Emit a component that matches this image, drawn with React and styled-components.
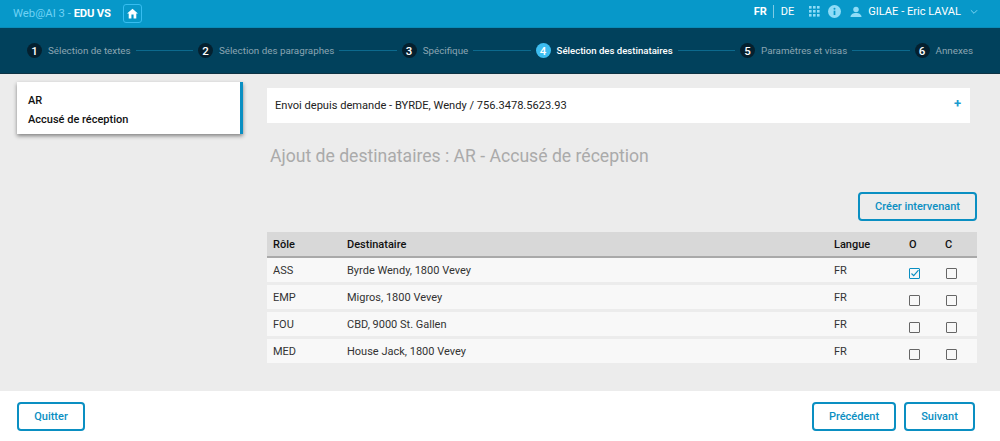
import React from "react";
import styled, { createGlobalStyle } from "styled-components";

const Global = createGlobalStyle`
  html, body { margin: 0; padding: 0; background: #fff; }
  body { font-family: Roboto, "Liberation Sans", sans-serif; }
`;

const Page = styled.div`
  width: 1000px;
  height: 441px;
  display: flex;
  flex-direction: column;
  overflow: hidden;
`;

const TopBar = styled.header`
  height: 28px;
  flex: none;
  box-sizing: border-box;
  background: #0798c9;
  border-bottom: 1px solid #0a8bb8;
  display: flex;
  align-items: center;
  padding: 0 22px 0 13px;
  color: #fff;
`;

const Brand = styled.div`
  color: #6fd2f5;
  font-size: 11.3px;
  white-space: nowrap;
  b { color: #fff; font-weight: 700; letter-spacing: -0.2px; }
`;

const HomeButton = styled.div`
  width: 17px;
  height: 17px;
  margin-left: 12px;
  border: 1px solid #37bdf0;
  border-radius: 3px;
  display: flex;
  align-items: center;
  justify-content: center;
`;

const TopRight = styled.div`
  margin-left: auto;
  display: flex;
  align-items: center;
  margin-top: -4px;
`;

const Lang = styled.span`
  font-weight: ${(p) => (p.$active ? 700 : 400)};
  font-size: 11px;
`;

const LangSep = styled.span`
  width: 1px;
  height: 13px;
  background: #7fcbe4;
  margin: 0 7px 0 6px;
`;

const User = styled.span`
  font-size: 11.1px;
  margin-left: 6px;
`;

const Stepper = styled.nav`
  height: 46px;
  flex: none;
  box-sizing: border-box;
  background: #01415c;
  border-bottom: 1px solid #0d3344;
  display: flex;
  align-items: center;
  padding: 0 27px;
`;

const Step = styled.div`
  display: flex;
  align-items: center;
  flex: none;
  gap: 6px;
`;

const StepNum = styled.span`
  width: 15px;
  height: 15px;
  border-radius: 50%;
  background: ${(p) => (p.$active ? "#3dbdf0" : "#04202f")};
  color: #fff;
  font-size: 11.5px;
  font-weight: 500;
  display: flex;
  align-items: center;
  justify-content: center;
`;

const StepLabel = styled.span`
  font-size: ${(p) => (p.$active ? 9.6 : 9.8)}px;
  color: ${(p) => (p.$active ? "#fff" : "#8ba5b2")};
  font-weight: ${(p) => (p.$active ? 500 : 400)};
  white-space: nowrap;
`;

const StepLine = styled.span`
  flex: 1;
  height: 1px;
  background: #0c6a8e;
  margin: 0 5px;
`;

const Main = styled.main`
  flex: 1;
  background: #ececec;
  display: flex;
  padding: 8px 23px 0 17px;
  min-height: 0;
`;

const Side = styled.aside`
  width: 226px;
  height: 52px;
  flex: none;
  box-sizing: border-box;
  background: #fff;
  border-right: 3px solid #0a8fc2;
  box-shadow: 0 2px 4px rgba(0, 0, 0, 0.45);
  padding: 9px 11px;
  font-size: 11px;
  font-weight: 500;
  line-height: 19px;
  color: #111;
`;

const Content = styled.section`
  flex: 1;
  margin-left: 24px;
  display: flex;
  flex-direction: column;
  min-width: 0;
`;

const Accordion = styled.div`
  height: 35px;
  margin: 6px 7px 0 0;
  background: #fff;
  display: flex;
  align-items: center;
  justify-content: space-between;
  padding: 0 9px 0 8px;
  font-size: 11.1px;
  color: #222;
`;

const Plus = styled.span`
  color: #1a9bcf;
  font-size: 13px;
  font-weight: 700;
  padding-bottom: 5px;
`;

const Title = styled.h2`
  margin: 22px 0 0 3px;
  font-size: 17.6px;
  line-height: 22px;
  font-weight: 400;
  color: #aaa;
`;

const Actions = styled.div`
  display: flex;
  justify-content: flex-end;
  margin-top: 25px;
`;

const Button = styled.button`
  box-sizing: border-box;
  height: 29px;
  width: ${(p) => p.$w}px;
  padding: 0;
  background: ${(p) => p.$bg || "#fff"};
  border: 2px solid #0a8fc2;
  border-radius: 4px;
  color: #0a8fc2;
  font-family: inherit;
  font-size: 11px;
  font-weight: 500;
`;

const Table = styled.div`
  margin-top: 11px;
  display: flex;
  flex-direction: column;
`;

const Cols = `
  display: grid;
  grid-template-columns: 74px 487px 74px 37px 1fr;
  align-items: center;
`;

const Head = styled.div`
  ${Cols}
  height: 26px;
  box-sizing: border-box;
  background: #d8d8d8;
  border-bottom: 2px solid #a9a9a9;
  font-size: 11px;
  font-weight: 500;
  color: #111;
  padding-left: 6px;
`;

const Row = styled.div`
  ${Cols}
  height: 24px;
  margin-bottom: 3px;
  background: #f8f8f8;
  font-size: 11px;
  color: #333;
  padding-left: 6px;
  &:last-child { margin-bottom: 0; }
`;

const HeadMark = styled.span`
  padding-left: 1px;
`;

const Check = styled.span`
  width: 9px;
  height: 9px;
  border: 1.5px solid ${(p) => (p.$on ? "#0a8fc2" : "#666")};
  border-radius: 1px;
  display: block;
  margin: 6px 0 0 1px;
  svg { display: block; }
`;

const Footer = styled.footer`
  height: 50px;
  flex: none;
  box-sizing: border-box;
  background: #fff;
  display: flex;
  align-items: center;
  padding: 1px 25px 0 17px;
  gap: 8px;
`;

const Spacer = styled.div`
  flex: 1;
`;

const steps = [
  ["1", "Sélection de textes"],
  ["2", "Sélection des paragraphes"],
  ["3", "Spécifique"],
  ["4", "Sélection des destinataires", true],
  ["5", "Paramètres et visas"],
  ["6", "Annexes"],
];

const rows = [
  ["ASS", "Byrde Wendy, 1800 Vevey", true],
  ["EMP", "Migros, 1800 Vevey"],
  ["FOU", "CBD, 9000 St. Gallen"],
  ["MED", "House Jack, 1800 Vevey"],
];

const Box = ({ on }) => (
  <Check $on={on}>
    {on && (
      <svg width="9" height="9" viewBox="0 0 9 9" fill="none">
        <path d="M1.5 4.5 L3.7 6.7 L8.5 1.2" stroke="#0a8fc2" strokeWidth="1.1" />
      </svg>
    )}
  </Check>
);

export default function App() {
  return (
    <Page>
      <Global />
      <TopBar>
        <Brand>
          Web@AI 3 - <b>EDU VS</b>
        </Brand>
        <HomeButton>
          <svg width="13" height="13" viewBox="0 0 24 24" fill="#fff">
            <path d="M10 21v-7h4v7h5v-9h3L12 3 2 12h3v9z" />
          </svg>
        </HomeButton>
        <TopRight>
          <Lang $active>FR</Lang>
          <LangSep />
          <Lang>DE</Lang>
          <svg width="11" height="11" viewBox="0 0 11 11" fill="#8fdcf7" style={{ marginLeft: 15 }}>
            {[0, 4, 8].flatMap((y) =>
              [0, 4, 8].map((x) => <rect key={`${x}-${y}`} x={x} y={y} width="2.6" height="2.6" />)
            )}
          </svg>
          <svg width="13" height="13" viewBox="0 0 24 24" style={{ marginLeft: 8 }}>
            <circle cx="12" cy="12" r="12" fill="#8fdcf7" />
            <rect x="10.4" y="10.5" width="3.2" height="8" fill="#0798c9" />
            <circle cx="12" cy="7" r="1.9" fill="#0798c9" />
          </svg>
          <svg width="12" height="12" viewBox="0 0 24 24" fill="#8fdcf7" style={{ marginLeft: 9 }}>
            <circle cx="12" cy="7" r="5.5" />
            <path d="M1 22c0-5 5-8 11-8s11 3 11 8z" />
          </svg>
          <User>GILAE - Eric LAVAL</User>
          <svg width="8" height="6" viewBox="0 0 9 6" fill="none" style={{ marginLeft: 9 }}>
            <path d="M1 1l3.5 3.5L8 1" stroke="#8fdcf7" strokeWidth="1" />
          </svg>
        </TopRight>
      </TopBar>
      <Stepper>
        {steps.map(([n, label, active], i) => (
          <React.Fragment key={n}>
            {i > 0 && <StepLine />}
            <Step>
              <StepNum $active={active}>{n}</StepNum>
              <StepLabel $active={active}>{label}</StepLabel>
            </Step>
          </React.Fragment>
        ))}
      </Stepper>
      <Main>
        <Side>
          AR
          <br />
          Accusé de réception
        </Side>
        <Content>
          <Accordion>
            <span>Envoi depuis demande - BYRDE, Wendy / 756.3478.5623.93</span>
            <Plus>+</Plus>
          </Accordion>
          <Title>Ajout de destinataires : AR - Accusé de réception</Title>
          <Actions>
            <Button $w={119} $bg="transparent">Créer intervenant</Button>
          </Actions>
          <Table>
            <Head>
              <span>Rôle</span>
              <span>Destinataire</span>
              <span>Langue</span>
              <HeadMark>O</HeadMark>
              <span>C</span>
            </Head>
            {rows.map(([role, name, on]) => (
              <Row key={role}>
                <span>{role}</span>
                <span>{name}</span>
                <span>FR</span>
                <span><Box on={on} /></span>
                <span><Box /></span>
              </Row>
            ))}
          </Table>
        </Content>
      </Main>
      <Footer>
        <Button $w={68}>Quitter</Button>
        <Spacer />
        <Button $w={84}>Précédent</Button>
        <Button $w={71}>Suivant</Button>
      </Footer>
    </Page>
  );
}
